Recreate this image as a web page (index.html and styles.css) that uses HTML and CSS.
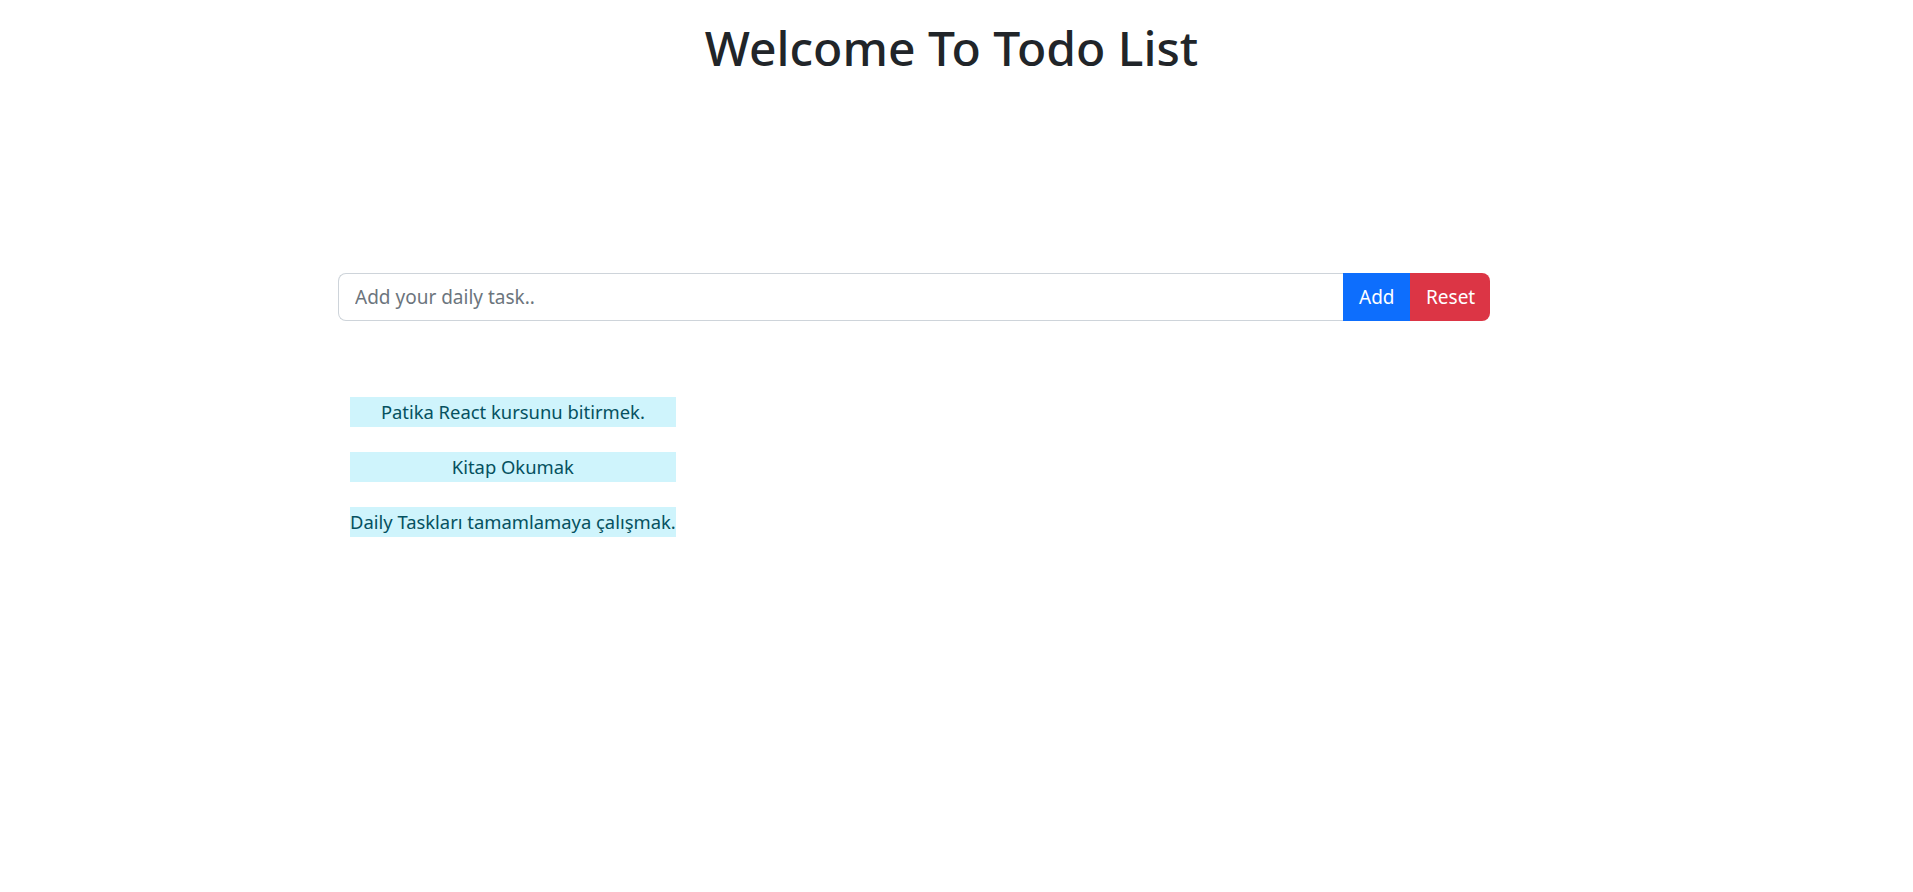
FILE: index.html
```html
<!DOCTYPE html>
<html lang="en">
<head>
<meta charset="utf-8">
<title>Todo List</title>
<link rel="stylesheet" href="styles.css">
</head>
<body>
<header class="header">
  <h1 class="title">Welcome To Todo List</h1>
</header>
<main class="main">
  <form class="task-form">
    <input class="task-input" type="text" placeholder="Add your daily task..">
    <button class="btn btn-add" type="button">Add</button>
    <button class="btn btn-reset" type="button">Reset</button>
  </form>
  <ul class="task-list">
    <li class="task-item">Patika React kursunu bitirmek.</li>
    <li class="task-item">Kitap Okumak</li>
    <li class="task-item">Daily Taskları tamamlamaya çalışmak.</li>
  </ul>
</main>
</body>
</html>
```

FILE: styles.css
```css
* { box-sizing: border-box; }
html, body { margin: 0; padding: 0; }
body {
  background: #fff;
  color: #212529;
  font-family: "Noto Sans", "Open Sans", sans-serif;
}
.header {
  text-align: center;
  padding-right: 10px;
}
.title {
  margin: 0;
  padding-top: 19px;
  font-size: 48px;
  font-weight: 500;
  line-height: 58px;
  color: #212529;
}
.main {
  margin-left: 338px;
  width: 1152px;
}
.task-form {
  display: flex;
  margin-top: 196px;
  height: 48px;
}
.task-input {
  flex: 1;
  min-width: 0;
  height: 48px;
  padding: 0 16px;
  font-family: inherit;
  font-size: 19px;
  color: #212529;
  border: 1px solid #ced4da;
  border-right: none;
  border-radius: 8px 0 0 8px;
  outline: none;
}
.task-input::placeholder { color: #6c757d; }
.btn {
  height: 48px;
  padding: 0 16px;
  border: none;
  font-family: inherit;
  font-size: 19px;
  color: #fff;
  cursor: pointer;
}
.btn-add { background: #0d6efd; width: 67px; }
.btn-reset { background: #dc3545; width: 80px; border-radius: 0 8px 8px 0; }
.task-list {
  list-style: none;
  margin: 76px 0 0 12px;
  padding: 0;
  display: inline-flex;
  flex-direction: column;
  gap: 25px;
}
.task-item {
  background: #cff4fc;
  color: #055160;
  font-size: 18.4px;
  line-height: 30px;
  height: 30px;
  text-align: center;
  white-space: nowrap;
}
```
